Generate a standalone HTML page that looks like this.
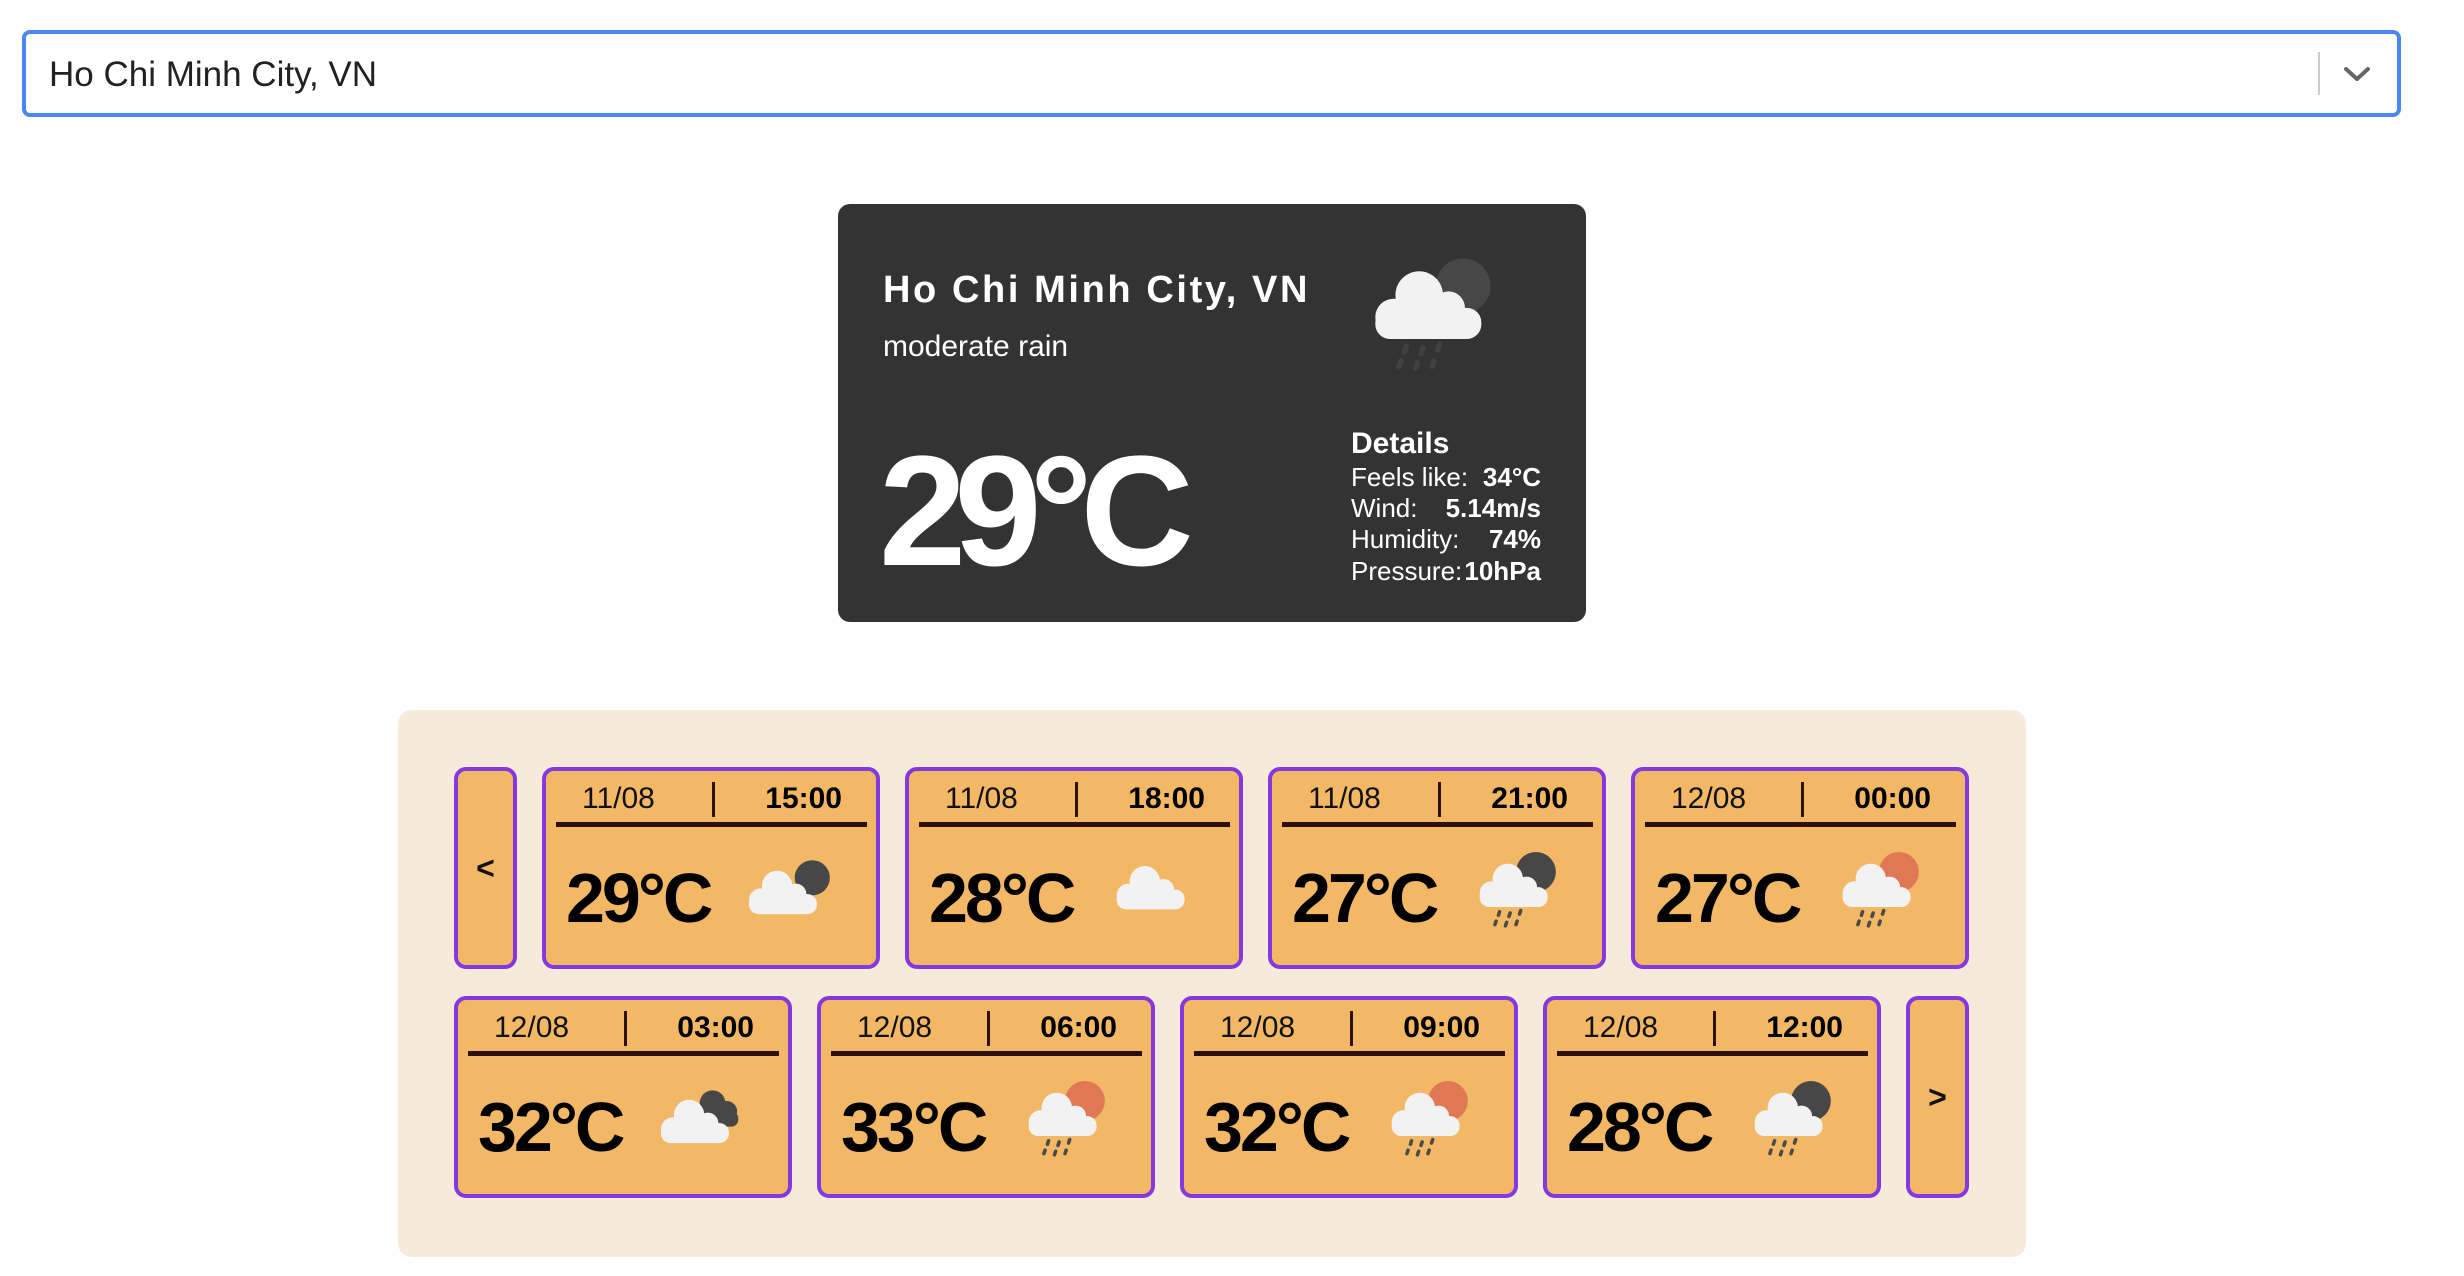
<!DOCTYPE html>
<html><head><meta charset="utf-8">
<style>
*{margin:0;padding:0;box-sizing:border-box}
html,body{width:2464px;height:1276px;background:#fff;overflow:hidden;font-family:"Liberation Sans",Arial,sans-serif}
.a{position:absolute;white-space:nowrap;line-height:1}
.sel{position:absolute;left:22px;top:30px;width:2379px;height:87px;border:4px solid #4a87f0;border-radius:8px;background:#fff}
.dark{position:absolute;left:838px;top:204px;width:748px;height:418px;background:#333;border-radius:12px}
.fc{position:absolute;left:398px;top:710px;width:1628px;height:547px;background:#f6ebdb;border-radius:14px}
.c{position:absolute;width:338px;height:202px;background:#f2b866;border:4px solid #8338e0;border-radius:12px}
.c .d{position:absolute;left:36px;top:13px;font-size:30px;line-height:1;color:#111}
.c .t{position:absolute;right:34px;top:13px;font-size:30px;line-height:1;font-weight:bold;color:#000}
.c .s{position:absolute;left:166px;top:11px;width:3px;height:35px;background:#2d1010}
.c .u{position:absolute;left:10px;top:51px;width:311px;height:5px;background:#2d1010}
.c .tp{position:absolute;left:20px;top:92px;font-size:70px;line-height:1;font-weight:bold;letter-spacing:-3px;color:#000}
.c svg{position:absolute;left:203px;top:81px;width:82px;height:82px}
.b{position:absolute;width:63px;height:202px;background:#f2b866;border:4px solid #8338e0;border-radius:12px;font-weight:bold;font-size:32px;display:flex;align-items:center;justify-content:center;color:#111}
</style></head><body>
<svg width="0" height="0" style="position:absolute">
<defs>
<g id="cl" fill="#f2f2f2"><circle cx="28" cy="23" r="13"/><circle cx="44" cy="30" r="9"/><circle cx="14" cy="35" r="10"/><rect x="4" y="30" width="58" height="17" rx="8"/></g>
<g id="rn" stroke="#4a4a4a" stroke-width="3" stroke-linecap="round"><line x1="21" y1="51" x2="20" y2="54"/><line x1="30" y1="52" x2="29" y2="55"/><line x1="39" y1="50" x2="38" y2="53"/><line x1="18" y1="59" x2="17" y2="62"/><line x1="27" y1="60" x2="26" y2="63"/><line x1="36" y1="59" x2="35" y2="62"/></g>
</defs></svg>

<div class="sel">
 <div class="a" style="left:23px;top:23px;font-size:35px;color:#222">Ho Chi Minh City, VN</div>
 <div style="position:absolute;left:2292px;top:18px;width:2px;height:43px;background:#ccc"></div>
 <svg style="position:absolute;left:2315px;top:30px" width="32" height="20"><path d="M5 5 L16 15 L27 5" fill="none" stroke="#666" stroke-width="4" stroke-linecap="round" stroke-linejoin="round"/></svg>
</div>

<div class="dark">
 <div class="a" style="left:45px;top:67px;font-size:38px;font-weight:bold;color:#fff;letter-spacing:2.6px">Ho Chi Minh City, VN</div>
 <div class="a" style="left:45px;top:128px;font-size:30px;color:#fff">moderate rain</div>
 <div class="a" style="left:41px;top:229px;font-size:157px;font-weight:bold;color:#fff;letter-spacing:-12px">29°C</div>
 <div class="a" style="left:513px;top:225px;font-size:30px;font-weight:bold;color:#fff">Details</div>
 <div class="a" style="left:513px;top:260px;font-size:26px;color:#fff">Feels like:</div>
 <div class="a" style="left:513px;top:291px;font-size:26px;color:#fff">Wind:</div>
 <div class="a" style="left:513px;top:322px;font-size:26px;color:#fff">Humidity:</div>
 <div class="a" style="left:513px;top:354px;font-size:26px;color:#fff">Pressure:</div>
 <div class="a" style="right:45px;top:260px;font-size:26px;color:#fff;font-weight:bold">34°C</div>
 <div class="a" style="right:45px;top:291px;font-size:26px;color:#fff;font-weight:bold">5.14m/s</div>
 <div class="a" style="right:45px;top:322px;font-size:26px;color:#fff;font-weight:bold">74%</div>
 <div class="a" style="right:45px;top:354px;font-size:26px;color:#fff;font-weight:bold">10hPa</div>
 <svg style="position:absolute;left:530px;top:49px" width="128" height="128" viewBox="0 0 70 70"><circle cx="52" cy="18" r="15" fill="#474747"/><use href="#cl"/><use href="#rn" opacity="0.6"/></svg>
</div>

<div class="fc"></div>

<div class="b" style="left:454px;top:767px">&lt;</div>

<div class="c" style="left:542px;top:767px"><div class="d">11/08</div><div class="s"></div><div class="t">15:00</div><div class="u"></div><div class="tp">29°C</div>
<svg viewBox="0 0 70 70"><circle cx="54" cy="22" r="15" fill="#474747"/><g transform="translate(-4,6)"><use href="#cl"/></g></svg></div>
<div class="c" style="left:905px;top:767px"><div class="d">11/08</div><div class="s"></div><div class="t">18:00</div><div class="u"></div><div class="tp">28°C</div>
<svg viewBox="0 0 70 70"><g transform="translate(0,2)"><use href="#cl"/></g></svg></div>
<div class="c" style="left:1268px;top:767px"><div class="d">11/08</div><div class="s"></div><div class="t">21:00</div><div class="u"></div><div class="tp">27°C</div>
<svg viewBox="0 0 70 70"><circle cx="52" cy="17" r="17" fill="#474747"/><use href="#cl"/><use href="#rn"/></svg></div>
<div class="c" style="left:1631px;top:767px"><div class="d">12/08</div><div class="s"></div><div class="t">00:00</div><div class="u"></div><div class="tp">27°C</div>
<svg viewBox="0 0 70 70"><circle cx="52" cy="17" r="17" fill="#e07855"/><use href="#cl"/><use href="#rn"/></svg></div>

<div class="c" style="left:454px;top:996px"><div class="d">12/08</div><div class="s"></div><div class="t">03:00</div><div class="u"></div><div class="tp">32°C</div>
<svg viewBox="0 0 70 70"><g transform="translate(16,-4)" fill="#474747"><circle cx="28" cy="23" r="11"/><circle cx="40" cy="30" r="9"/><circle cx="18" cy="33" r="9"/><rect x="10" y="30" width="40" height="13" rx="6"/></g><g transform="translate(-4,6)"><use href="#cl"/></g></svg></div>
<div class="c" style="left:817px;top:996px"><div class="d">12/08</div><div class="s"></div><div class="t">06:00</div><div class="u"></div><div class="tp">33°C</div>
<svg viewBox="0 0 70 70"><circle cx="52" cy="17" r="17" fill="#e07855"/><use href="#cl"/><use href="#rn"/></svg></div>
<div class="c" style="left:1180px;top:996px"><div class="d">12/08</div><div class="s"></div><div class="t">09:00</div><div class="u"></div><div class="tp">32°C</div>
<svg viewBox="0 0 70 70"><circle cx="52" cy="17" r="17" fill="#e07855"/><use href="#cl"/><use href="#rn"/></svg></div>
<div class="c" style="left:1543px;top:996px"><div class="d">12/08</div><div class="s"></div><div class="t">12:00</div><div class="u"></div><div class="tp">28°C</div>
<svg viewBox="0 0 70 70"><circle cx="52" cy="17" r="17" fill="#474747"/><use href="#cl"/><use href="#rn"/></svg></div>

<div class="b" style="left:1906px;top:996px">&gt;</div>
</body></html>
